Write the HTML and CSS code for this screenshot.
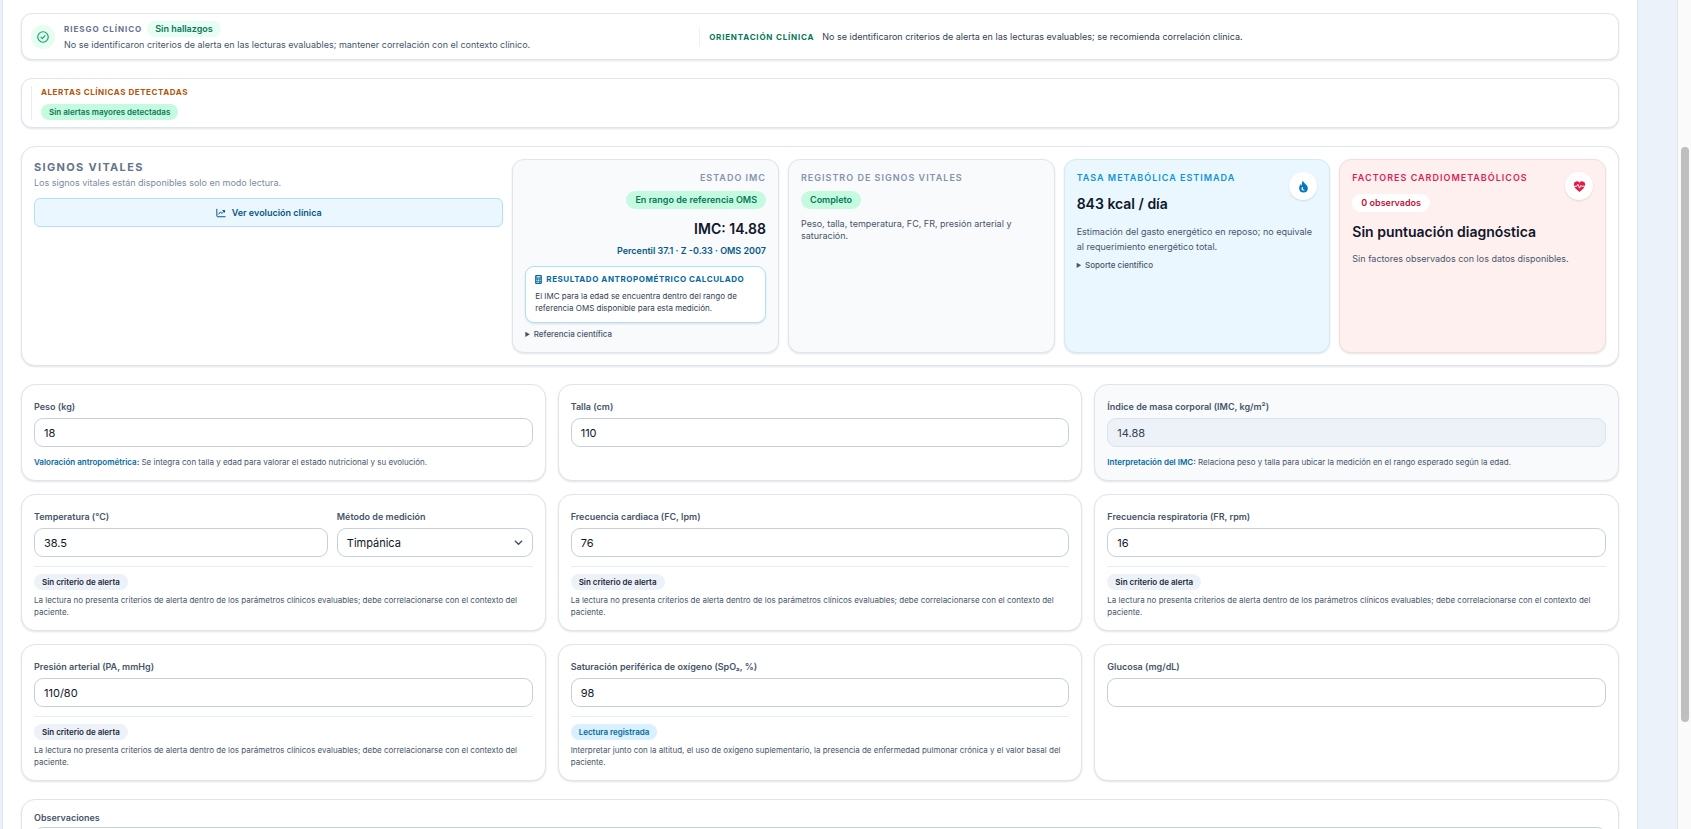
FILE: index.html
```html
<!DOCTYPE html>
<html lang="es">
<head>
<meta charset="utf-8">
<meta name="viewport" content="width=device-width, initial-scale=1">
<title>Signos vitales</title>
<link rel="stylesheet" href="styles.css">
</head>
<body>
<div class="app">
<main class="panel">
  <section class="card risk">
    <div class="risk-main">
      <span class="risk-icon">
        <svg viewBox="0 0 24 24" width="14" height="14" fill="none" stroke="currentColor" stroke-width="2" stroke-linecap="round" stroke-linejoin="round" aria-hidden="true"><circle cx="12" cy="12" r="9"/><path d="M8.500 12.300l2.400 2.400 4.600-5"/></svg>
      </span>
      <div>
        <div class="risk-head"><h2 class="caps caps-wide">Riesgo clínico</h2><span class="pill pill-mint">Sin hallazgos</span></div>
        <p class="text">No se identificaron criterios de alerta en las lecturas evaluables; mantener correlación con el contexto clínico.</p>
      </div>
    </div>
    <div class="guidance">
      <h2 class="caps caps-green">Orientación clínica</h2>
      <p class="text text-dark">No se identificaron criterios de alerta en las lecturas evaluables; se recomienda correlación clínica.</p>
    </div>
  </section>

  <section class="card alerts">
    <div class="alerts-body">
      <h2 class="caps caps-orange">Alertas clínicas detectadas</h2>
      <span class="pill pill-green">Sin alertas mayores detectadas</span>
    </div>
  </section>

  <section class="card vitals">
    <div class="intro">
      <h1 class="title">Signos vitales</h1>
      <p class="text text-muted">Los signos vitales están disponibles solo en modo lectura.</p>
      <button type="button" class="evolution">
        <svg viewBox="0 0 24 24" width="10" height="10" fill="none" stroke="currentColor" stroke-width="2.4" stroke-linecap="round" stroke-linejoin="round" aria-hidden="true"><path d="M2 3v16a2 2 0 0 0 2 2h18"/><path d="M6.500 14.500l4-5 4 3.500 6-7M16.500 6h4v4"/></svg>
        Ver evolución clínica
      </button>
    </div>
    <article class="tile tile-right">
      <h3 class="label">Estado IMC</h3>
      <span class="pill pill-lg pill-green">En rango de referencia OMS</span>
      <p class="value">IMC: 14.88</p>
      <p class="percentile">Percentil 37.1 · Z -0.33 · OMS 2007</p>
      <div class="result">
        <h4 class="caps caps-blue">
          <svg viewBox="0 0 384 512" width="7" height="9" fill="currentColor" aria-hidden="true"><path fill-rule="evenodd" d="M64 0h256a64 64 0 0 1 64 64v384a64 64 0 0 1-64 64H64a64 64 0 0 1-64-64V64A64 64 0 0 1 64 0zm16 64v80h224V64zm-8 136v56h56v-56zm92 0v56h56v-56zm92 0v56h56v-56zM72 290v56h56v-56zm92 0v56h56v-56zm92 0v56h56v-56zM72 386v56h148v-56zm184 0v56h56v-56z"/></svg>
          Resultado antropométrico calculado
        </h4>
        <p class="small text-dark">El IMC para la edad se encuentra dentro del rango de referencia OMS disponible para esta medición.</p>
      </div>
      <details class="more"><summary>Referencia científica</summary></details>
    </article>
    <article class="tile">
      <h3 class="label">Registro de signos vitales</h3>
      <span class="pill pill-lg pill-green">Completo</span>
      <p class="text note">Peso, talla, temperatura, FC, FR, presión arterial y saturación.</p>
    </article>
    <article class="tile tile-blue">
      <div class="tile-head">
        <div>
          <h3 class="label">Tasa metabólica estimada</h3>
          <p class="value value-tight">843 kcal / día</p>
        </div>
        <span class="badge"><svg viewBox="0 0 24 24" width="13" height="13" fill="currentColor" aria-hidden="true"><path fill-rule="evenodd" d="M11 1c.4 5 9 7.500 9 14.200A8 8 0 0 1 12 23a8 8 0 0 1-8-7.800c0-3.200 1.500-5.600 3.400-7.600.2 1.800.8 2.800 1.700 3.200C8.800 7.500 9.200 3.500 11 1zM9 13.500c-1.800 2.600-.4 6 3 6 1.200 0 2-.4 2.700-1.200-3.400.2-4.600-2-3.900-5.300-.7-.1-1.300 0-1.800.5z"/></svg></span>
      </div>
      <p class="text roomy">Estimación del gasto energético en reposo; no equivale al requerimiento energético total.</p>
      <details class="more"><summary>Soporte científico</summary></details>
    </article>
    <article class="tile tile-red">
      <div class="tile-head">
        <div>
          <h3 class="label">Factores cardiometabólicos</h3>
          <span class="pill pill-lg pill-white">0 observados</span>
        </div>
        <span class="badge"><svg viewBox="0 0 24 24" width="13" height="13" aria-hidden="true"><path fill="currentColor" d="M12 22C7 18 1.500 14 1.500 8.500A5.800 5.800 0 0 1 12 5a5.800 5.800 0 0 1 10.500 3.500C22.500 14 17 18 12 22z"/><path fill="none" stroke="#fff" stroke-width="1.800" stroke-linejoin="round" d="M1 11.500h6l2-3.500 3 7 2.500-5 1.200 1.500H23"/></svg></span>
      </div>
      <p class="value value-factors">Sin puntuación diagnóstica</p>
      <p class="text">Sin factores observados con los datos disponibles.</p>
    </article>
  </section>

  <form class="fields">
    <div class="card field">
      <label for="peso">Peso (kg)</label>
      <input id="peso" type="text" value="18">
      <p class="small hint"><strong>Valoración antropométrica:</strong> Se integra con talla y edad para valorar el estado nutricional y su evolución.</p>
    </div>
    <div class="card field">
      <label for="talla">Talla (cm)</label>
      <input id="talla" type="text" value="110">
    </div>
    <div class="card field field-computed">
      <label for="imc">Índice de masa corporal (IMC, kg/m²)</label>
      <input id="imc" type="text" value="14.88" readonly>
      <p class="small hint"><strong>Interpretación del IMC:</strong> Relaciona peso y talla para ubicar la medición en el rango esperado según la edad.</p>
    </div>

    <div class="card field">
      <div class="pair">
        <div><label for="temp">Temperatura (°C)</label><input id="temp" type="text" value="38.5"></div>
        <div><label for="metodo">Método de medición</label><select id="metodo"><option>Timpánica</option></select></div>
      </div>
      <div class="reading"><span class="pill pill-gray">Sin criterio de alerta</span>
      <p class="small">La lectura no presenta criterios de alerta dentro de los parámetros clínicos evaluables; debe correlacionarse con el contexto del paciente.</p></div>
    </div>
    <div class="card field">
      <label for="fc">Frecuencia cardiaca (FC, lpm)</label>
      <input id="fc" type="text" value="76">
      <div class="reading"><span class="pill pill-gray">Sin criterio de alerta</span>
      <p class="small">La lectura no presenta criterios de alerta dentro de los parámetros clínicos evaluables; debe correlacionarse con el contexto del paciente.</p></div>
    </div>
    <div class="card field">
      <label for="fr">Frecuencia respiratoria (FR, rpm)</label>
      <input id="fr" type="text" value="16">
      <div class="reading"><span class="pill pill-gray">Sin criterio de alerta</span>
      <p class="small">La lectura no presenta criterios de alerta dentro de los parámetros clínicos evaluables; debe correlacionarse con el contexto del paciente.</p></div>
    </div>

    <div class="card field">
      <label for="pa">Presión arterial (PA, mmHg)</label>
      <input id="pa" type="text" value="110/80">
      <div class="reading"><span class="pill pill-gray">Sin criterio de alerta</span>
      <p class="small">La lectura no presenta criterios de alerta dentro de los parámetros clínicos evaluables; debe correlacionarse con el contexto del paciente.</p></div>
    </div>
    <div class="card field">
      <label for="spo2">Saturación periférica de oxígeno (SpO₂, %)</label>
      <input id="spo2" type="text" value="98">
      <div class="reading"><span class="pill pill-sky">Lectura registrada</span>
      <p class="small">Interpretar junto con la altitud, el uso de oxígeno suplementario, la presencia de enfermedad pulmonar crónica y el valor basal del paciente.</p></div>
    </div>
    <div class="card field">
      <label for="glucosa">Glucosa (mg/dL)</label>
      <input id="glucosa" type="text" value="">
    </div>
  </form>

  <section class="card notes">
    <label for="obs">Observaciones</label>
    <textarea id="obs" rows="4"></textarea>
  </section>
</main>
<div class="scrollbar" aria-hidden="true"><div class="thumb"></div></div>
</div>
</body>
</html>
```
FILE: styles.css
```css
*, *::before, *::after { box-sizing: border-box; }
html, body { height: 100%; }
body {
  margin: 0;
  overflow: hidden;
  background: #ecf2fa;
  color: #475569;
  font-family: Inter, "Open Sans", sans-serif;
  font-size: 9px;
  line-height: 12px;
}
h1, h2, h3, h4, p { margin: 0; font-size: inherit; }
button, input, select, textarea { font: inherit; }

.app { display: flex; height: 100vh; overflow: hidden; }
.panel {
  flex: 1;
  display: flex;
  flex-direction: column;
  gap: 18px;
  min-width: 0;
  height: max-content;
  margin: 0 39px 0 2px;
  padding: 13px 18px;
  background: #fff;
  border: solid #dbe5f0;
  border-width: 0 1px;
}
.scrollbar {
  width: 14px;
  padding: 147px 2px 0 3px;
  background: #fafafa;
  border-left: 1px solid #e2e4e8;
}
.thumb { height: 575px; border-radius: 4px; background: #bfbfbf; }

.card {
  background: #fff;
  border: 1px solid #dfe5ee;
  border-radius: 14px;
  box-shadow: 0 1px 2px rgba(15, 23, 42, 0.12);
}

.caps { font-size: 8px; font-weight: 700; letter-spacing: 0.07em; text-transform: uppercase; color: #64748b; }
.caps-wide { letter-spacing: 0.12em; }
.caps-green { letter-spacing: 0.1em; color: #047857; }
.caps-orange { color: #b45309; }
.caps-blue { color: #0369a1; }
.text-dark { color: #334155; }
.text-muted { color: #7c8ba1; }
.small { font-size: 8px; }

.pill {
  display: inline-block;
  padding: 2px 8px;
  border-radius: 10px;
  font-size: 8px;
  font-weight: 600;
  line-height: 12px;
}
.pill-lg { padding: 3px 9px; font-size: 9px; }
.pill-mint { background: #e8fdf3; color: #047857; font-size: 9px; font-weight: 600; }
.pill-green { background: #c6fae0; color: #047857; }
.pill-white { background: #fff; color: #be123c; }
.pill-gray { background: #edf2f8; color: #1e293b; }
.pill-sky { background: #d8f0ff; color: #0369a1; }

.risk { display: flex; align-items: center; padding: 7px 9px; border-radius: 11px; }
.risk .text { line-height: 15px; }
.risk-main { flex: 3 1 0; display: flex; align-items: center; gap: 9px; }
.risk-icon {
  display: grid;
  place-items: center;
  width: 24px;
  height: 24px;
  border-radius: 50%;
  background: #e6fdf2;
  color: #10a371;
}
.risk-head { display: flex; align-items: center; gap: 5px; }
.guidance { flex: 4 1 0; display: flex; align-items: center; gap: 8px; padding: 2px 9px; border-left: 1px solid #eef2f6; }

.alerts { padding: 7px 9px; border-radius: 11px; }
.alerts-body {
  display: flex;
  flex-direction: column;
  align-items: flex-start;
  gap: 6px;
  padding-left: 9px;
  border-left: 1px solid #e8edf3;
}

.vitals { display: grid; grid-template-columns: 176fr repeat(4, 100fr); gap: 9px; padding: 12px; }
.title { font-size: 11px; line-height: 17px; font-weight: 700; letter-spacing: 0.12em; text-transform: uppercase; color: #64748b; }
.intro .text { line-height: 14px; }
.evolution {
  display: flex;
  align-items: center;
  justify-content: center;
  gap: 6px;
  width: 100%;
  height: 29px;
  margin-top: 8px;
  border: 1px solid #b0e0fa;
  border-radius: 6px;
  background: #eaf7ff;
  color: #075985;
  font-weight: 600;
}
.tile {
  padding: 12px;
  border: 1px solid #dfe5ee;
  border-radius: 12px;
  background: #f8fafc;
  box-shadow: 0 1px 2px rgba(15, 23, 42, 0.12);
}
.tile .label { font-size: 9px; line-height: 12px; font-weight: 600; letter-spacing: 1px; text-transform: uppercase; color: #8492ab; }
.value { color: #0f172a; font-size: 14px; line-height: 18px; font-weight: 600; }
.tile-right { display: flex; flex-direction: column; align-items: flex-end; }
.tile .pill { margin-top: 7px; }
.tile-right .value { margin-top: 11px; }
.percentile { margin-top: 7px; color: #075985; font-weight: 600; }
.result {
  width: 100%;
  margin-top: 9px;
  padding: 6px 9px 8px;
  border: 1px solid #b0e0fa;
  border-radius: 9px;
  background: #fff;
  box-shadow: 0 1px 2px rgba(15, 23, 42, 0.12);
}
.result .caps { display: flex; align-items: center; gap: 4px; margin-bottom: 5px; white-space: nowrap; }
.more { align-self: flex-start; margin-top: 5px; font-size: 8px; font-weight: 500; }
.note { margin-top: 9px; }
.tile-blue { background: #eaf7ff; border-color: #d3e9f8; }
.tile-blue .label { color: #0e94d8; }
.tile-red { background: #fff0f0; border-color: #fadadd; }
.tile-red .label { color: #e11d55; }
.tile-red .pill { margin-top: 10px; }
.tile-head { display: flex; justify-content: space-between; }
.badge {
  display: grid;
  place-items: center;
  width: 28px;
  height: 28px;
  border-radius: 50%;
  background: #fff;
  color: #0277bd;
  box-shadow: 0 1px 2px rgba(15, 23, 42, 0.12);
}
.tile-red .badge { color: #e11d48; }
.value-tight { margin-top: 11px; }
.roomy { margin-top: 11px; line-height: 15px; }
.value-factors { margin: 11px 0 12px; }

.fields { display: grid; grid-template-columns: repeat(3, 1fr); gap: 13px 12px; }
.field { padding: 16px 12px 12px; }
label { display: block; margin-bottom: 5px; font-weight: 600; color: #475569; }
input, select, textarea {
  display: block;
  width: 100%;
  height: 29px;
  padding: 0 9px;
  border: 1px solid #c4d0de;
  border-radius: 9px;
  background: #fff;
  color: #0f172a;
  font-size: 11px;
}
textarea { height: 70px; }
.hint { margin-top: 9px; }
.hint strong { color: #0369a1; font-weight: 600; }
.field-computed { background: #f8fafc; }
.field-computed input { background: #edf2f8; border-color: #dbe3ee; color: #334155; }
.pair { display: grid; grid-template-columns: 3fr 2fr; gap: 9px; }
select {
  appearance: none;
  background: #fff url("data:image/svg+xml,%3Csvg xmlns='http://www.w3.org/2000/svg' viewBox='0 0 10 10' fill='none' stroke='%23475569' stroke-width='1.600'%3E%3Cpath d='M1 3l4 4 4-4'/%3E%3C/svg%3E") no-repeat right 9px center / 9px 9px;
}
.reading { margin-top: 9px; padding-top: 7px; border-top: 1px solid #e8edf3; }
.reading .pill { display: table; margin-bottom: 4px; }
.notes { padding: 12px; }
.notes label { margin-bottom: 3px; }
```
